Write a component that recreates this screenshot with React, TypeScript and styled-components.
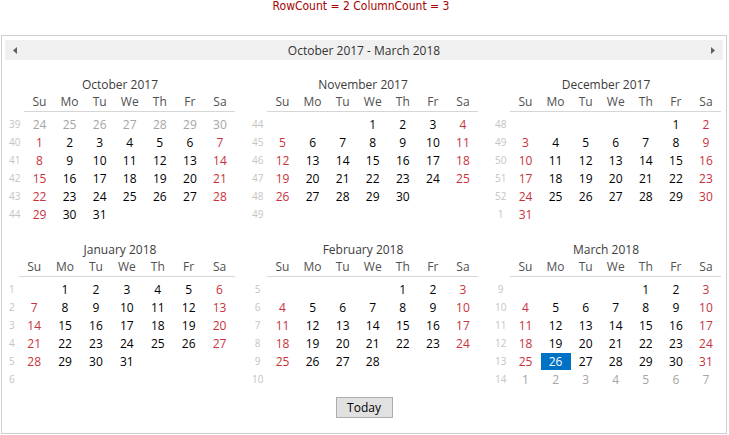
import styled, { createGlobalStyle } from 'styled-components';

const colors = {
  caption: '#a80000',
  border: '#d0d0d0',
  bar: '#f0f0f0',
  text: '#000000',
  title: '#3c3c3c',
  dayName: '#505050',
  weekend: '#c8323c',
  other: '#a6a6a6',
  weekNum: '#c4c4c4',
  rule: '#d6d6d6',
  selected: '#0072c6',
};

const GlobalStyle = createGlobalStyle`
  body {
    margin: 0;
    background: #ffffff;
    font-family: "Open Sans", "Noto Sans", sans-serif;
  }
`;

const Caption = styled.div`
  height: 35px;
  padding-right: 7px;
  text-align: center;
  font-family: "Liberation Sans Narrow", "DejaVu Sans Condensed", "Liberation Sans", sans-serif;
  font-size: 12px;
  line-height: 12px;
  color: ${colors.caption};
`;

const Panel = styled.div`
  box-sizing: border-box;
  width: 726px;
  height: 399px;
  margin-left: 1px;
  padding: 4px 3px 0;
  border: 1px solid ${colors.border};
  display: flex;
  flex-direction: column;
`;

const NavBar = styled.div`
  height: 20px;
  background: ${colors.bar};
  display: flex;
  align-items: center;
  justify-content: space-between;
  padding: 0 7px;
`;

const RangeTitle = styled.div`
  font-size: 12px;
  color: #333333;
`;

const NavArrow = styled.div`
  width: 6px;
  display: flex;
  justify-content: center;
`;

const MonthsGrid = styled.div`
  display: grid;
  grid-template-columns: repeat(3, 230px);
  column-gap: 13px;
  row-gap: 19px;
  margin-top: 17px;
`;

const MonthBlock = styled.div`
  display: flex;
  flex-direction: column;
`;

const MonthTitle = styled.div`
  height: 16px;
  line-height: 16px;
  text-align: center;
  font-size: 12px;
  color: ${colors.title};
`;

const DaysTable = styled.div`
  display: grid;
  grid-template-columns: auto repeat(7, 1fr);
  row-gap: 1px;
`;

const HeadCell = styled.div<{ $rule?: boolean }>`
  height: 18px;
  line-height: 18px;
  margin-bottom: 3px;
  text-align: center;
  font-size: 12px;
  color: ${colors.dayName};
  border-bottom: 1px solid ${p => (p.$rule ? colors.rule : 'transparent')};
`;

const WeekNum = styled.div`
  height: 17px;
  line-height: 17px;
  padding: 0 4px;
  text-align: center;
  font-size: 10px;
  color: ${colors.weekNum};
`;

type Kind = 'cur' | 'other' | 'blank';

const DayCell = styled.div<{ $kind: Kind; $weekend: boolean; $selected: boolean }>`
  height: 17px;
  line-height: 17px;
  text-align: center;
  font-size: 12px;
  background: ${p => (p.$selected ? colors.selected : 'transparent')};
  color: ${p =>
    p.$selected
      ? '#ffffff'
      : p.$kind === 'other'
      ? colors.other
      : p.$weekend
      ? colors.weekend
      : colors.text};
`;

const Footer = styled.div`
  display: flex;
  justify-content: center;
  margin-top: 9px;
`;

const TodayButton = styled.button`
  box-sizing: border-box;
  width: 57px;
  height: 21px;
  padding: 0;
  border: 1px solid #adadad;
  background: #e1e1e1;
  font-family: "Open Sans", "Noto Sans", sans-serif;
  font-size: 12px;
  color: #000000;
`;

const monthNames = [
  'January', 'February', 'March', 'April', 'May', 'June',
  'July', 'August', 'September', 'October', 'November', 'December',
];
const dayNames = ['Su', 'Mo', 'Tu', 'We', 'Th', 'Fr', 'Sa'];

// первый месяц показывает хвост предыдущего, последний — начало следующего
const months = [
  { year: 2017, month: 9, weeks: [39, 40, 41, 42, 43, 44] },
  { year: 2017, month: 10, weeks: [44, 45, 46, 47, 48, 49] },
  { year: 2017, month: 11, weeks: [48, 49, 50, 51, 52, 1] },
  { year: 2018, month: 0, weeks: [1, 2, 3, 4, 5, 6] },
  { year: 2018, month: 1, weeks: [5, 6, 7, 8, 9, 10] },
  { year: 2018, month: 2, weeks: [9, 10, 11, 12, 13, 14] },
];

function Arrow({ dir }: { dir: 'left' | 'right' }) {
  return (
    <NavArrow>
      <svg width="4" height="7" viewBox="0 0 4 7">
        {dir === 'left' ? (
          <polygon points="4,0 4,7 0,3.5" fill="#606060" />
        ) : (
          <polygon points="0,0 0,7 4,3.5" fill="#606060" />
        )}
      </svg>
    </NavArrow>
  );
}

function Month({ year, month, weeks, index }: { year: number; month: number; weeks: number[]; index: number }) {
  const firstDay = new Date(year, month, 1);
  const offset = firstDay.getDay() === 0 ? 7 : firstDay.getDay();
  const isFirst = index === 0;
  const isLast = index === months.length - 1;

  const cells = weeks.flatMap((week, r) => [
    <WeekNum key={`w${r}`}>{week}</WeekNum>,
    ...Array.from({ length: 7 }, (_, c) => {
      const date = new Date(year, month, 1 - offset + r * 7 + c);
      let kind: Kind = 'cur';
      if (date.getMonth() !== month) {
        const before = date < firstDay;
        kind = (before && isFirst) || (!before && isLast) ? 'other' : 'blank';
      }
      const selected = date.getFullYear() === 2018 && date.getMonth() === 2 && date.getDate() === 26;
      return (
        <DayCell key={`${r}-${c}`} $kind={kind} $weekend={c === 0 || c === 6} $selected={selected}>
          {kind === 'blank' ? '' : date.getDate()}
        </DayCell>
      );
    }),
  ]);

  return (
    <MonthBlock>
      <MonthTitle>{monthNames[month]} {year}</MonthTitle>
      <DaysTable>
        <HeadCell />
        {dayNames.map(n => (
          <HeadCell key={n} $rule>{n}</HeadCell>
        ))}
        {cells}
      </DaysTable>
    </MonthBlock>
  );
}

export default function App() {
  return (
    <>
      <GlobalStyle />
      <Caption>RowCount = 2 ColumnCount = 3</Caption>
      <Panel>
        <NavBar>
          <Arrow dir="left" />
          <RangeTitle>October 2017 - March 2018</RangeTitle>
          <Arrow dir="right" />
        </NavBar>
        <MonthsGrid>
          {months.map((m, i) => (
            <Month key={i} year={m.year} month={m.month} weeks={m.weeks} index={i} />
          ))}
        </MonthsGrid>
        <Footer>
          <TodayButton>Today</TodayButton>
        </Footer>
      </Panel>
    </>
  );
}
